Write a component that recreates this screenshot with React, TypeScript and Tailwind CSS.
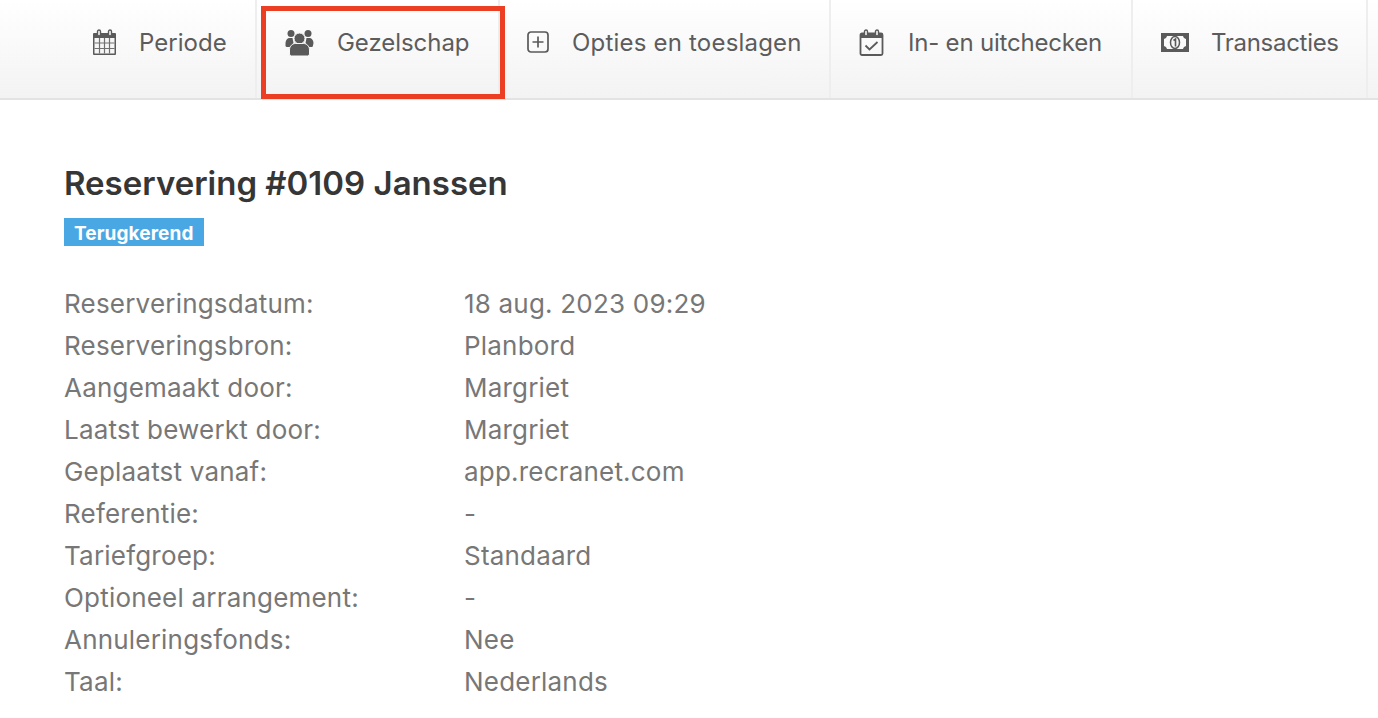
const rows = [
  ["Reserveringsdatum:", "18 aug. 2023 09:29"],
  ["Reserveringsbron:", "Planbord"],
  ["Aangemaakt door:", "Margriet"],
  ["Laatst bewerkt door:", "Margriet"],
  ["Geplaatst vanaf:", "app.recranet.com"],
  ["Referentie:", "-"],
  ["Tariefgroep:", "Standaard"],
  ["Optioneel arrangement:", "-"],
  ["Annuleringsfonds:", "Nee"],
  ["Taal:", "Nederlands"],
];

function CalendarGrid() {
  return (
    <svg width="25" height="27" viewBox="0 0 25 27" fill="none">
      <path d="M2 4h21a1 1 0 0 1 1 1v20a1 1 0 0 1-1 1H2a1 1 0 0 1-1-1V5a1 1 0 0 1 1-1z" fill="#5a5a5a" />
      <rect x="5.500" y="1" width="3" height="6" rx="1.500" fill="#f8f8f8" stroke="#5a5a5a" strokeWidth="1.400" />
      <rect x="16.500" y="1" width="3" height="6" rx="1.500" fill="#f8f8f8" stroke="#5a5a5a" strokeWidth="1.400" />
      <path d="M2.500 9h20v15.500h-20z" fill="#f6f6f6" />
      <path d="M2.500 14h20M2.500 19.500h20M7.500 9v15.500M12.500 9v15.500M17.500 9v15.500" stroke="#707070" strokeWidth="1.200" />
    </svg>
  );
}

function People() {
  return (
    <svg width="29" height="27" viewBox="0 0 29 27" fill="#5a5a5a">
      <circle cx="6" cy="4.500" r="3.500" />
      <circle cx="23" cy="4.500" r="3.500" />
      <path d="M0.500 14c0-3 2-5 4-5h3l1 5-3 4H2a1.500 1.500 0 0 1-1.500-1.500z" />
      <path d="M28.500 14c0-3-2-5-4-5h-3l-1 5 3 4h3a1.500 1.500 0 0 0 1.500-1.500z" />
      <circle cx="14.500" cy="9.500" r="5.500" stroke="#f7f7f7" strokeWidth="1" />
      <path d="M4.500 21c0-4 3-6.500 6-6.500h8c3 0 6 2.500 6 6.500v4a2 2 0 0 1-2 2h-16a2 2 0 0 1-2-2z" stroke="#f7f7f7" strokeWidth="1" />
    </svg>
  );
}

function PlusBox() {
  return (
    <svg width="22" height="22" viewBox="0 0 22 22" fill="none" stroke="#5a5a5a" strokeWidth="1.700">
      <rect x="1" y="1" width="20" height="20" rx="3" />
      <path d="M11 5.500v11M5.500 11h11" />
    </svg>
  );
}

function CalendarCheck() {
  return (
    <svg width="25" height="27" viewBox="0 0 25 27" fill="none">
      <rect x="1.500" y="4.500" width="22" height="21.500" rx="1.500" stroke="#5a5a5a" strokeWidth="1.800" />
      <path d="M1.500 5.500a1.500 1.500 0 0 1 1.500-1.500h19a1.500 1.500 0 0 1 1.500 1.500V9h-22z" fill="#5a5a5a" />
      <rect x="5.500" y="1" width="3" height="6" rx="1.500" fill="#f8f8f8" stroke="#5a5a5a" strokeWidth="1.400" />
      <rect x="16.500" y="1" width="3" height="6" rx="1.500" fill="#f8f8f8" stroke="#5a5a5a" strokeWidth="1.400" />
      <path d="M6.500 16.500l4 4 8-7.500" stroke="#5a5a5a" strokeWidth="1.800" />
    </svg>
  );
}

function Banknote() {
  return (
    <svg width="28" height="19" viewBox="0 0 28 19" fill="none">
      <path fillRule="evenodd" clipRule="evenodd" d="M0 0h28v19H0zM6 3c-.3 1.500-1.500 2.700-3 3v7c1.500.3 2.700 1.500 3 3h16c.3-1.500 1.500-2.700 3-3V6c-1.500-.3-2.700-1.500-3-3z" fill="#5a5a5a" />
      <ellipse cx="14" cy="9.500" rx="4.500" ry="6" fill="#f6f6f6" stroke="#5a5a5a" strokeWidth="1.500" />
      <path d="M12.500 7.500l2-1.500v7.500" stroke="#5a5a5a" strokeWidth="1.600" />
    </svg>
  );
}

const tabs = [
  { label: "Periode", icon: <CalendarGrid />, cls: "w-[257px] pl-[92px] gap-[22px]", text: "tracking-[0.05px]" },
  { label: "Gezelschap", icon: <People />, cls: "w-[243px] pl-[28px] gap-[23px]", text: "tracking-[-0.05px]" },
  { label: "Opties en toeslagen", icon: <PlusBox />, cls: "w-[331px] pl-[27px] gap-[23px]", text: "tracking-[0.2px]" },
  { label: "In- en uitchecken", icon: <CalendarCheck />, cls: "w-[302px] pl-[28px] gap-[24px]", text: "tracking-[-0.2px]" },
  { label: "Transacties", icon: <Banknote />, cls: "w-[235px] pl-[28px] gap-[22px]", text: "tracking-[-0.3px]" },
];

export default function App() {
  return (
    <main className="relative h-[718px] w-[1378px] overflow-hidden bg-white font-['Inter','Lato',sans-serif]">
      {/* Tabs */}
      <nav className="flex h-[100px] border-b-2 border-[#e3e3e3] bg-gradient-to-b from-white to-[#f3f3f3]">
        {tabs.map((tab) => (
          <div
            key={tab.label}
            className={`flex shrink-0 items-start border-r-2 border-[#eeeeee] pt-[28px] ${tab.cls}`}
          >
            <span className="flex h-[28px] items-center">{tab.icon}</span>
            <span className={`text-[24px] leading-[30px] text-[#5c5c5c] ${tab.text}`}>{tab.label}</span>
          </div>
        ))}
      </nav>

      {/* Highlight box */}
      <div className="absolute left-[261px] top-[6px] h-[93px] w-[244px] border-[5px] border-[#ec3e23]" />

      <section className="px-[64px] pt-[62px]">
        <h1 className="text-[33px] font-semibold leading-[42px] text-[#363636]">
          Reservering #0109 Janssen
        </h1>
        <span className="mt-[14px] block w-fit bg-[#49a8e4] px-[10px] pt-[4px] text-[19px] font-bold leading-[24px] tracking-[0.1px] text-white">
          Terugkerend
        </span>

        <dl className="mt-[37px] grid grid-cols-[400px_1fr] text-[26px] leading-[42px] tracking-[0.2px] text-[#777777]">
          {rows.map(([label, value]) => (
            <div key={label} className="contents">
              <dt>{label}</dt>
              <dd>{value}</dd>
            </div>
          ))}
        </dl>
      </section>
    </main>
  );
}
